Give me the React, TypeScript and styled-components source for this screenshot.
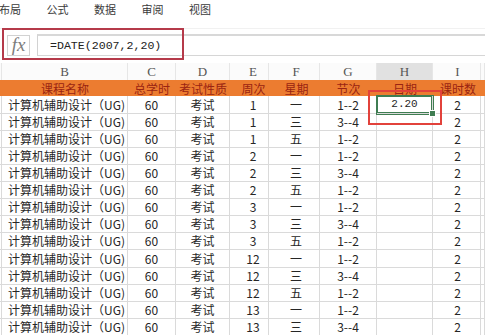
import React from "react";
import styled, { createGlobalStyle, css } from "styled-components";

const Global = createGlobalStyle`
  html, body { margin: 0; padding: 0; background: #ffffff; }
  body { width: 485px; height: 335px; overflow: hidden; font-family: "Noto Sans CJK SC", "Noto Sans", sans-serif; }
  * { box-sizing: border-box; }
`;

const COLS = [
  { key: "A", w: 2, pl: 0 },
  { key: "B", w: 126, pl: 0 },
  { key: "C", w: 48, pl: 0 },
  { key: "D", w: 54, pl: 0 },
  { key: "E", w: 39, pl: 8 },
  { key: "F", w: 51, pl: 4 },
  { key: "G", w: 57, pl: 0 },
  { key: "H", w: 56, pl: 0 },
  { key: "I", w: 48, pl: 2 },
];
const TEMPLATE = COLS.map((c) => `${c.w}px`).join(" ") + " 1fr";

const Page = styled.div`
  width: 485px;
  height: 335px;
  overflow: hidden;
  display: flex;
  flex-direction: column;
`;

const MenuBar = styled.div`
  height: 30px;
  display: flex;
  align-items: flex-start;
  gap: 25.5px;
  margin-left: -1px;
  padding-top: 2px;
  border-bottom: 1px solid #f1f1f1;
`;

const MenuItem = styled.span`
  font-size: 11px;
  line-height: 14px;
  color: #3a3a3a;
  white-space: nowrap;
`;

const FormulaBar = styled.div`
  position: relative;
  height: 30px;
  display: flex;
  gap: 7px;
  padding: 5px 0 3px 7px;
`;

const FxBox = styled.div`
  width: 23px;
  margin-top: 1px;
  border: 1px solid #d2d2d2;
  display: flex;
  align-items: center;
  justify-content: center;
  font-family: "Liberation Serif", serif;
  font-style: italic;
  font-size: 19px;
  color: #7d7d7d;
  line-height: 1;
  padding-bottom: 2px;
`;

const InputBox = styled.div`
  flex: 1;
  border-top: 2px solid #d8d8d8;
  border-bottom: 1px solid #d6d6d6;
  border-left: 1px solid #d2d2d2;
  display: flex;
  align-items: center;
  padding-left: 12px;
  font-family: "Liberation Mono", monospace;
  font-size: 11.6px;
  color: #222;
  white-space: pre;
`;

const RedMark = styled.div<{ $tone: "dark" | "bright" }>`
  position: absolute;
  pointer-events: none;
  border: 2px solid ${(p) => (p.$tone === "dark" ? "#b53a4a" : "#e2423b")};
`;

const FormulaMark = styled(RedMark)`
  left: 2px;
  top: -1px;
  width: 182px;
  height: 32px;
`;

const Sheet = styled.div`
  position: relative;
  margin-top: 4px;
  display: flex;
  flex-direction: column;
`;

const CellMark = styled(RedMark)`
  left: 368px;
  top: 27px;
  width: 74px;
  height: 35px;
`;

const Row = styled.div<{ $h: number; $band?: boolean }>`
  display: grid;
  grid-template-columns: ${TEMPLATE};
  height: ${(p) => p.$h}px;
  flex: none;
  ${(p) =>
    p.$band &&
    css`
      background: #ec7c30;
    `}
`;

const ColHead = styled.div<{ $active?: boolean; $pl: number }>`
  display: flex;
  align-items: center;
  justify-content: center;
  padding-left: ${(p) => p.$pl}px;
  font-family: "Liberation Serif", serif;
  font-size: 13px;
  color: #555;
  border-right: 1px solid #e6e6e6;
  background: ${(p) => (p.$active ? "#e1e1e1" : "#fbfbfb")};
  border-bottom: ${(p) => (p.$active ? "2px solid #3f7d52" : "1px solid #dcdcdc")};
  padding-top: 1px;
`;

const BandCell = styled.div<{ $pl: number }>`
  display: flex;
  align-items: center;
  justify-content: center;
  padding-left: ${(p) => p.$pl}px;
  font-size: 12px;
  color: #9a2412;
  white-space: nowrap;
`;

const Cell = styled.div<{ $left?: boolean; $pl: number; $selected?: boolean; $mono?: boolean }>`
  position: relative;
  display: flex;
  align-items: center;
  justify-content: ${(p) => (p.$left ? "flex-start" : "center")};
  padding-left: ${(p) => (p.$left ? 6 : p.$pl)}px;
  font-size: 12px;
  color: #262626;
  white-space: nowrap;
  border-right: 1px solid #dadada;
  border-bottom: 1px solid #dadada;
  ${(p) =>
    p.$mono &&
    css`
      font-family: "Liberation Mono", monospace;
      font-size: 11px;
    `}
  ${(p) =>
    p.$selected &&
    css`
      box-shadow: inset 0 0 0 1px #3f7d52, 0 0 0 1px #3f7d52;
      z-index: 1;
    `}
`;

const FillHandle = styled.span`
  position: absolute;
  right: -3px;
  bottom: -3px;
  width: 5px;
  height: 5px;
  background: #3f7d52;
  border: 1px solid #fff;
  box-sizing: content-box;
  margin: -1px;
`;

const menu = ["布局", "公式", "数据", "审阅", "视图"];
const heads = ["", "课程名称", "总学时", "考试性质", "周次", "星期", "节次", "日期", "课时数"];

const rows: [number, string, string][] = [
  [1, "一", "1--2"],
  [1, "三", "3--4"],
  [1, "五", "1--2"],
  [2, "一", "1--2"],
  [2, "三", "3--4"],
  [2, "五", "1--2"],
  [3, "一", "1--2"],
  [3, "三", "3--4"],
  [3, "五", "1--2"],
  [12, "一", "1--2"],
  [12, "三", "3--4"],
  [12, "五", "1--2"],
  [13, "一", "1--2"],
  [13, "三", "3--4"],
];

export default function App() {
  return (
    <Page>
      <Global />
      <MenuBar>
        {menu.map((m) => (
          <MenuItem key={m}>{m}</MenuItem>
        ))}
      </MenuBar>
      <FormulaBar>
        <FxBox>fx</FxBox>
        <InputBox>=DATE(2007,2,20)</InputBox>
        <FormulaMark $tone="dark" />
      </FormulaBar>
      <Sheet>
        <Row $h={17}>
          {COLS.map((c) => (
            <ColHead key={c.key} $pl={c.pl} $active={c.key === "H"}>
              {c.key === "A" ? "" : c.key}
            </ColHead>
          ))}
          <ColHead $pl={0} />
        </Row>
        <Row $h={16} $band>
          {heads.map((h, i) => (
            <BandCell key={i} $pl={COLS[i].pl}>
              {h}
            </BandCell>
          ))}
          <BandCell $pl={0} />
        </Row>
        {rows.map(([wk, day, sec], r) => {
          const vals = ["", "计算机辅助设计（UG)", "60", "考试", String(wk), day, sec, r === 0 ? "2.20" : "", "2"];
          return (
            <Row key={r} $h={17.1}>
              {vals.map((v, i) => (
                <Cell
                  key={i}
                  $pl={COLS[i].pl}
                  $left={i === 1}
                  $mono={i === 7}
                  $selected={r === 0 && i === 7}
                >
                  {v}
                  {r === 0 && i === 7 && <FillHandle />}
                </Cell>
              ))}
              <Cell $pl={0} />
            </Row>
          );
        })}
        <CellMark $tone="bright" />
      </Sheet>
    </Page>
  );
}
